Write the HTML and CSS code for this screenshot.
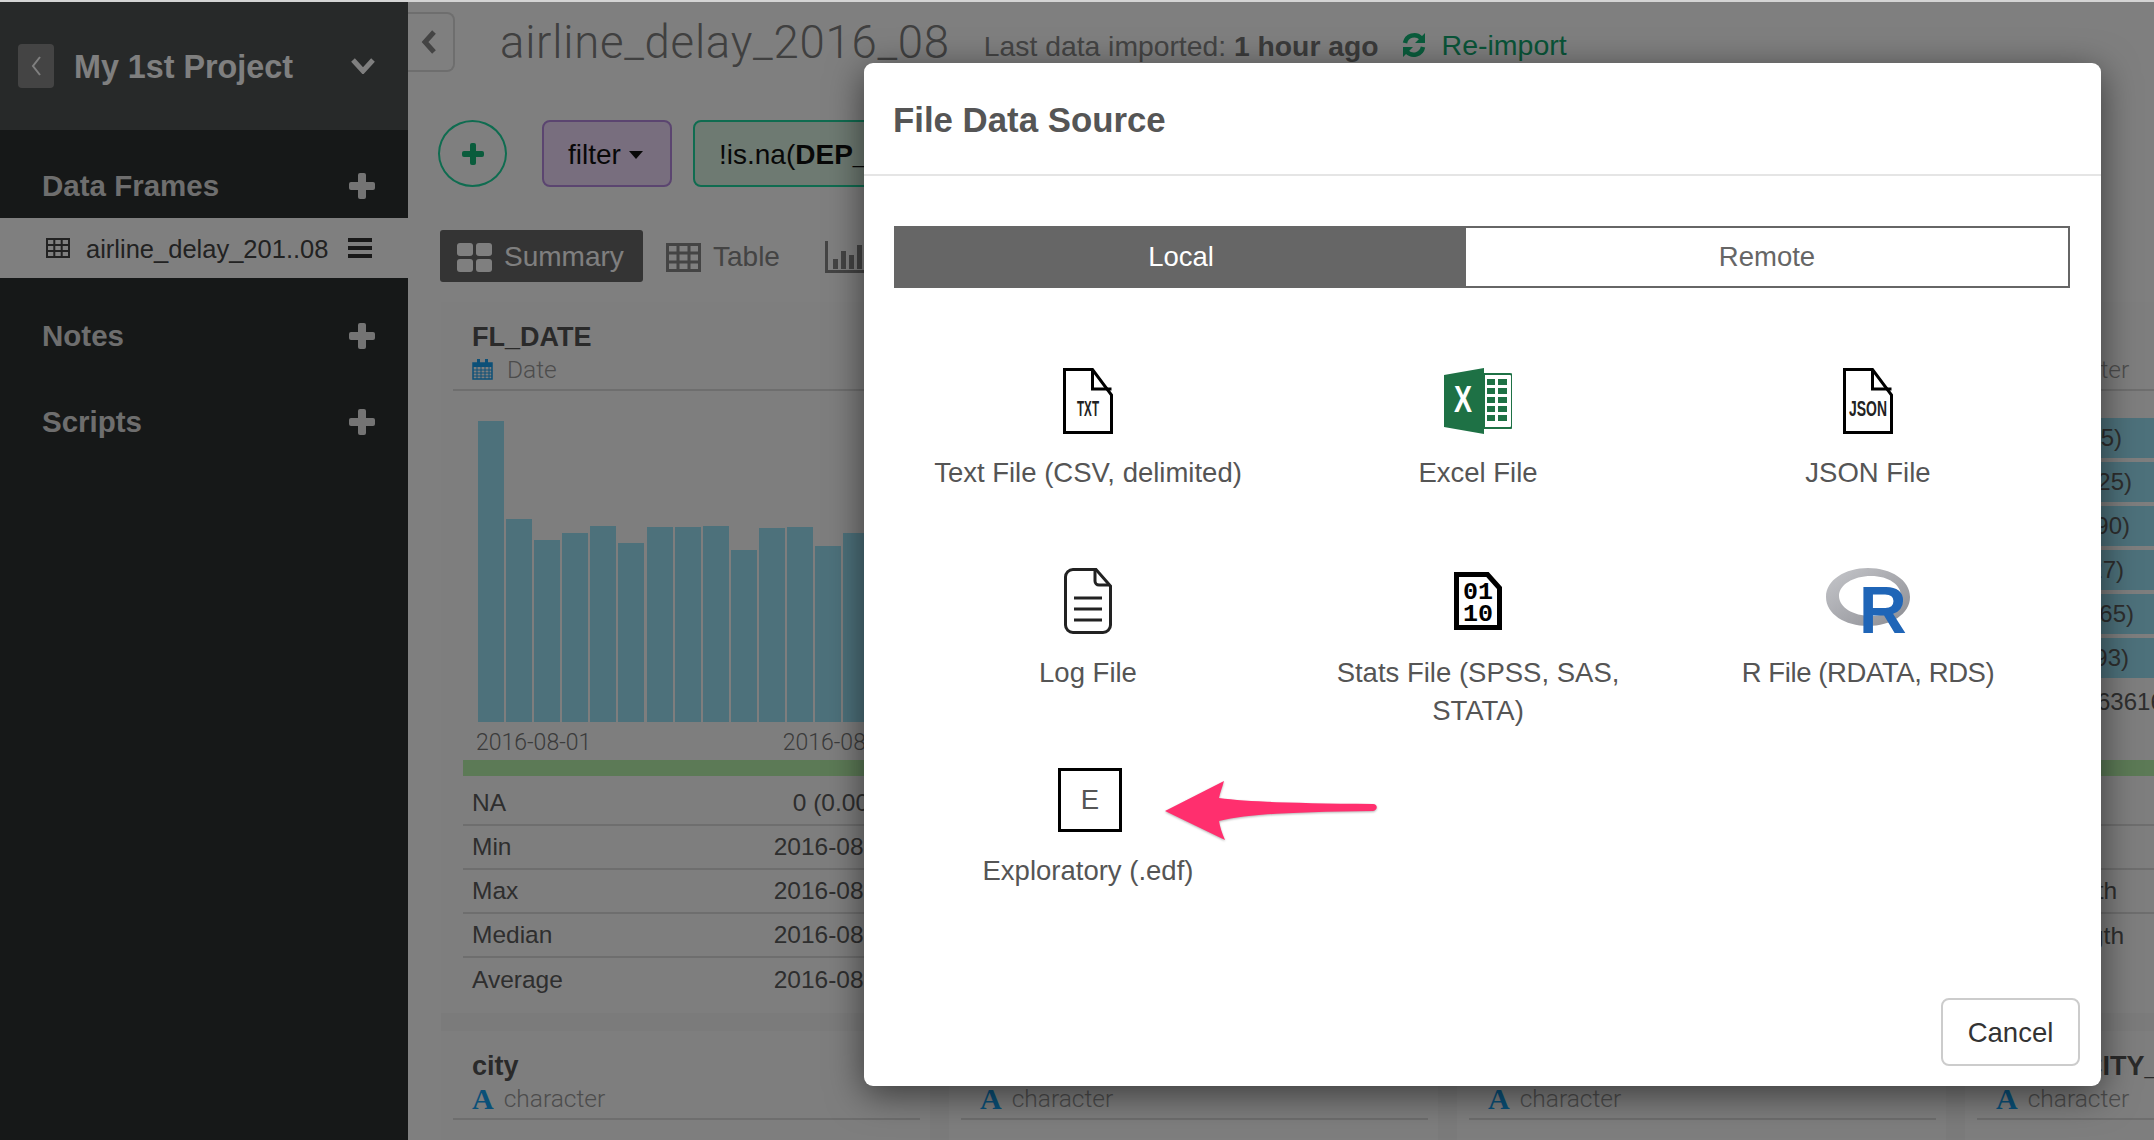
FILE: index.html
```html
<!DOCTYPE html>
<html lang="en">
<head>
  <meta charset="UTF-8" />
  <title>File Data Source</title>
  <link rel="stylesheet" href="styles.css">
</head>
<body>
  <div class="topline"></div>
  <div class="app">

    <!-- Sidebar -->
    <aside class="sidebar">
      <div class="project">
        <span class="project-back"><svg width="12" height="24" viewBox="0 0 12 24"><path d="M10 3 3 12l7 9" fill="none" stroke="#fff" stroke-width="2"/></svg></span>
        <span class="project-name">My 1st Project</span>
        <svg class="project-caret" width="26" height="16" viewBox="0 0 26 16"><path d="M3 2l10 11L23 2" fill="none" stroke="#fff" stroke-width="5"/></svg>
      </div>
      <div class="side-head side-head-first"><span>Data Frames</span><i class="plus"></i></div>
      <div class="frame-row">
        <svg width="24" height="20" viewBox="0 0 24 20"><path d="M1 1h22v18H1zM1 7h22M1 13h22M8.300 1v18M15.700 1v18" fill="none" stroke="#444" stroke-width="2"/></svg>
        <span class="frame-name">airline_delay_201..08</span>
        <span class="burger"><i></i><i></i><i></i></span>
      </div>
      <div class="side-head side-head-notes"><span>Notes</span><i class="plus"></i></div>
      <div class="side-head"><span>Scripts</span><i class="plus"></i></div>
    </aside>

    <!-- Main area behind the dialog -->
    <main class="main">
      <div class="titlebar">
        <span class="collapse"><svg width="16" height="26" viewBox="0 0 16 26"><path d="M13 3 4 13l9 10" fill="none" stroke="#888" stroke-width="5"/></svg></span>
        <span class="frame-title">airline_delay_2016_08</span>
        <span class="imported">Last data imported: <b>1 hour ago</b></span>
        <svg class="reimport-icon" width="26" height="26" viewBox="0 0 26 26"><path d="M4 11a9.500 9.500 0 0 1 16-5M22 15a9.500 9.500 0 0 1-16 5" fill="none" stroke="#14b878" stroke-width="4.500"/><path d="M24 1v10H14zM2 25V15h10z" fill="#14b878"/></svg>
        <span class="reimport">Re-import</span>
      </div>

      <div class="toolbar">
        <span class="add-step"><i class="plus plus-green"></i></span>
        <span class="step step-filter">filter <i class="caret"></i></span>
        <span class="step step-cond">!is.na(<b>DEP_DELAY</b>)</span>
      </div>

      <div class="tabs">
        <span class="tab tab-on"><span class="tiles"><i></i><i></i><i></i><i></i></span>Summary</span>
        <span class="tab"><svg width="35" height="29" viewBox="0 0 35 29"><path d="M1.500 1.500h32v26h-32zM1.500 10h32M1.500 19h32M12 1.500v26M23 1.500v26" fill="none" stroke="#888" stroke-width="3"/></svg>Table</span>
        <span class="tab tab-chart"><svg width="40" height="32" viewBox="0 0 40 32"><path d="M1.500 0v30.500H40" fill="none" stroke="#888" stroke-width="3"/><path d="M8 18h5v10H8zM16 10h5v18h-5zM24 14h5v14h-5zM32 4h5v24h-5z" fill="#888"/></svg>Chart</span>
      </div>

      <div class="cards">
        <section class="card">
          <div class="card-head">
            <div class="col-name">FL_DATE</div>
            <div class="col-type">
              <svg width="21" height="21" viewBox="0 0 21 21"><path d="M1 4h19v16H1z" fill="none" stroke="#18a0f0" stroke-width="1.500"/><path d="M1 4h19v4H1z" fill="#18a0f0"/><path d="M5 0h3v6H5zM13 0h3v6h-3z" fill="#18a0f0"/><path d="M1 11h19M1 14h19M1 17h19M5 8v12M9 8v12M13 8v12M17 8v12" stroke="#18a0f0" stroke-width="1"/></svg>
              <span>Date</span>
            </div>
          </div>
          <div class="card-chart">
            <div class="bars">
              <i style="height:301px"></i><i style="height:203px"></i><i style="height:182px"></i><i style="height:189px"></i><i style="height:196px"></i><i style="height:179px"></i><i style="height:195px"></i><i style="height:195px"></i><i style="height:196px"></i><i style="height:172px"></i><i style="height:194px"></i><i style="height:195px"></i><i style="height:176px"></i><i style="height:189px"></i>
            </div>
            <div class="axis"><span>2016-08-01</span><span>2016-08-31</span></div>
          </div>
          <div class="fill-bar"></div>
          <div class="stats">
            <div class="stat"><span>NA</span><span>0 (0.00%)</span></div>
            <div class="stat"><span>Min</span><span>2016-08-01</span></div>
            <div class="stat"><span>Max</span><span>2016-08-31</span></div>
            <div class="stat"><span>Median</span><span>2016-08-16</span></div>
            <div class="stat"><span>Average</span><span>2016-08-16</span></div>
          </div>
        </section>

        <section class="card"></section>
        <section class="card"></section>

        <section class="card">
          <div class="card-head">
            <div class="col-name">ORIGIN</div>
            <div class="col-type"><span class="type-a">A</span><span>character</span></div>
          </div>
          <div class="card-chart card-chart-list">
            <div class="list-row"><span style="width:135px">(2345)</span></div>
            <div class="list-row"><span style="width:145px">(1925)</span></div>
            <div class="list-row"><span style="width:143px">(1790)</span></div>
            <div class="list-row"><span style="width:137px">(1627)</span></div>
            <div class="list-row"><span style="width:147px">(1565)</span></div>
            <div class="list-row"><span style="width:142px">(1493)</span></div>
            <div class="list-more">63616</div>
          </div>
          <div class="fill-bar"></div>
          <div class="stats">
            <div class="stat"><span>NA</span></div>
            <div class="stat"><span>Unique</span></div>
            <div class="stat"><span>Min Length</span></div>
            <div class="stat"><span>Max Length</span></div>
          </div>
        </section>

        <section class="card">
          <div class="card-head">
            <div class="col-name">city</div>
            <div class="col-type"><span class="type-a">A</span><span>character</span></div>
          </div>
        </section>
        <section class="card">
          <div class="card-head">
            <div class="col-name">carrier</div>
            <div class="col-type"><span class="type-a">A</span><span>character</span></div>
          </div>
        </section>
        <section class="card">
          <div class="card-head">
            <div class="col-name">ORIGIN_CITY_NAME</div>
            <div class="col-type"><span class="type-a">A</span><span>character</span></div>
          </div>
        </section>
        <section class="card">
          <div class="card-head">
            <div class="col-name">DEST_CITY_NAME</div>
            <div class="col-type"><span class="type-a">A</span><span>character</span></div>
          </div>
        </section>
      </div>
    </main>
  </div>

  <div class="backdrop"></div>

  <!-- Dialog -->
  <div class="modal">
    <div class="modal-head">File Data Source</div>
    <div class="modal-body">
      <div class="switch">
        <div class="switch-on">Local</div>
        <div class="switch-off">Remote</div>
      </div>
      <div class="sources">
        <div class="source">
          <div class="source-icon">
            <svg width="50" height="66" viewBox="0 0 50 66"><path d="M1.500 1.500h28L48.500 27v37.500h-47z" fill="#fff" stroke="#000" stroke-width="3"/><path d="M29.500 1.500V21h19" fill="none" stroke="#000" stroke-width="3"/><text x="25" y="48" text-anchor="middle" class="doc-text" textLength="22" lengthAdjust="spacingAndGlyphs">TXT</text></svg>
          </div>
          <div class="source-label">Text File (CSV, delimited)</div>
        </div>
        <div class="source">
          <div class="source-icon">
            <svg width="68" height="66" viewBox="0 0 68 66"><path d="M40 6h26a2 2 0 0 1 2 2v50a2 2 0 0 1-2 2H40z" fill="#fff" stroke="#1e7145" stroke-width="2"/><path d="M40 0 0 7v52l40 7z" fill="#1e7145"/><path d="M43 11h8v6h-8zM54 11h9v6h-9zM43 20h8v6h-8zM54 20h9v6h-9zM43 29h8v6h-8zM54 29h9v6h-9zM43 38h8v6h-8zM54 38h9v6h-9zM43 47h8v6h-8zM54 47h9v6h-9z" fill="#1e7145"/><text x="19" y="44" text-anchor="middle" class="xl-text" textLength="18" lengthAdjust="spacingAndGlyphs">X</text></svg>
          </div>
          <div class="source-label">Excel File</div>
        </div>
        <div class="source">
          <div class="source-icon">
            <svg width="50" height="66" viewBox="0 0 50 66"><path d="M1.500 1.500h28L48.500 27v37.500h-47z" fill="#fff" stroke="#000" stroke-width="3"/><path d="M29.500 1.500V21h19" fill="none" stroke="#000" stroke-width="3"/><text x="25" y="48" text-anchor="middle" class="doc-text" textLength="38" lengthAdjust="spacingAndGlyphs">JSON</text></svg>
          </div>
          <div class="source-label">JSON File</div>
        </div>
        <div class="source">
          <div class="source-icon">
            <svg width="48" height="66" viewBox="0 0 48 66"><path d="M9 1.500h23L46.500 18v39a7.500 7.500 0 0 1-7.500 7.500H9A7.500 7.500 0 0 1 1.500 57V9A7.500 7.500 0 0 1 9 1.500z" fill="#fff" stroke="#222" stroke-width="3"/><path d="M31 2v11a4 4 0 0 0 4 4h11" fill="none" stroke="#222" stroke-width="3"/><path d="M10 30h28M10 41h28M10 52h28" stroke="#222" stroke-width="3"/></svg>
          </div>
          <div class="source-label">Log File</div>
        </div>
        <div class="source">
          <div class="source-icon">
            <svg width="48" height="58" viewBox="0 0 48 58"><path d="M2.500 2.500h31L45.500 16v39.500h-43z" fill="#fff" stroke="#000" stroke-width="5"/><text x="24" y="27" text-anchor="middle" class="bin-text" textLength="30" lengthAdjust="spacingAndGlyphs">01</text><text x="24" y="49" text-anchor="middle" class="bin-text" textLength="30" lengthAdjust="spacingAndGlyphs">10</text></svg>
          </div>
          <div class="source-label">Stats File (SPSS, SAS, STATA)</div>
        </div>
        <div class="source">
          <div class="source-icon">
            <svg width="84" height="66" viewBox="0 0 84 66">
              <defs><linearGradient id="ring" x1="0" y1="0" x2="1" y2="1"><stop offset="0" stop-color="#c6c7cb"/><stop offset="1" stop-color="#8b8c92"/></linearGradient></defs>
              <path fill-rule="evenodd" d="M42 0c23 0 42 12 42 29s-19 29-42 29S0 46 0 29 19 0 42 0zm3 8c-18 0-32 9-32 20s14 20 32 20 30-9 30-20S63 8 45 8z" fill="url(#ring)"/>
              <text x="33" y="65" class="r-text">R</text>
            </svg>
          </div>
          <div class="source-label source-label-tight">R File (RDATA, RDS)</div>
        </div>
        <div class="source">
          <div class="edf-box">E</div>
          <div class="source-label">Exploratory (.edf)</div>
        </div>
      </div>
    </div>
    <div class="modal-foot"><span class="btn-cancel">Cancel</span></div>

    <svg class="arrow" width="214" height="66" viewBox="0 0 214 66"><path d="M2 32 61 2c-2 7-4 12-5 17 30 4 75 5 154 6 5 0 5 6 0 7-79 1-124 3-154 10 1 6 3 12 6 19z" fill="#ff2f6e"/></svg>
  </div>
</body>
</html>
```

FILE: styles.css
```css
* {
  box-sizing: border-box;
}
html, body {
  margin: 0;
  height: 100%;
  overflow: hidden;
}
body {
  position: relative;
  background: #fff;
  color: #666;
  font-family: "Liberation Sans", Arial, sans-serif;
  font-size: 24px;
}
.topline {
  height: 2px;
  background: #d4d4d4;
}
.app {
  display: flex;
  height: 1138px;
}

/* sidebar */
.sidebar {
  width: 408px;
  flex: none;
  background: #2c3030;
}
.project {
  height: 128px;
  background: #4e5252;
  display: flex;
  align-items: center;
  padding: 0 32px 0 18px;
  color: #fff;
}
.project-back {
  width: 36px;
  height: 44px;
  border-radius: 4px;
  background: #888;
  display: flex;
  align-items: center;
  justify-content: center;
}
.project-name {
  margin-left: 20px;
  padding-top: 2px;
  font-size: 32.300px;
  font-weight: bold;
  flex: 1;
}
.side-head {
  height: 86px;
  padding: 0 33px 0 42px;
  display: flex;
  align-items: center;
  justify-content: space-between;
  font-size: 29.500px;
  font-weight: bold;
  color: #dcdcdc;
}
.side-head-first {
  height: 88px;
  padding-top: 24px;
}
.side-head-notes {
  margin-top: 15px;
}
.plus {
  position: relative;
  display: block;
  width: 26px;
  height: 26px;
}
.plus::before, .plus::after {
  content: "";
  position: absolute;
  background: #e8e8e8;
  border-radius: 2px;
}
.plus::before {
  left: 0;
  right: 0;
  top: 9px;
  height: 8px;
}
.plus::after {
  top: 0;
  bottom: 0;
  left: 9px;
  width: 8px;
}
.plus-green {
  width: 22px;
  height: 22px;
}
.plus-green::before {
  top: 8px;
  height: 6px;
  background: #14b878;
}
.plus-green::after {
  left: 8px;
  width: 6px;
  background: #14b878;
}
.frame-row {
  height: 60px;
  background: #fff;
  display: flex;
  align-items: center;
  padding: 0 36px 0 46px;
  color: #444;
}
.frame-name {
  margin-left: 16px;
  padding-top: 2px;
  font-size: 25.500px;
  flex: 1;
}
.burger {
  display: flex;
  flex-direction: column;
  gap: 4px;
  width: 24px;
}
.burger i {
  height: 4px;
  background: #333;
}

/* main area */
.main {
  flex: 1;
  min-width: 0;
  overflow: hidden;
}
.titlebar {
  display: flex;
  align-items: center;
  height: 70px;
  padding-top: 10px;
}
.collapse {
  width: 47px;
  height: 60px;
  border: 2px solid #ddd;
  border-left: 0;
  border-radius: 0 8px 8px 0;
  display: flex;
  align-items: center;
  padding-left: 13px;
}
.frame-title {
  margin-left: 45px;
  font-family: Roboto, "Liberation Sans", sans-serif;
  font-weight: 300;
  font-size: 45.500px;
  letter-spacing: .75px;
  color: #808080;
}
.imported {
  margin-left: 34px;
  padding-top: 8px;
  font-size: 28.300px;
  color: #888;
}
.imported b {
  color: #777;
}
.reimport-icon {
  margin-left: 22px;
  margin-top: 6px;
}
.reimport {
  margin-left: 15px;
  padding-top: 6px;
  font-size: 28.500px;
  color: #12a870;
}
.toolbar {
  display: flex;
  align-items: center;
  gap: 21px;
  height: 67px;
  margin-top: 48px;
  padding-left: 30px;
}
.add-step {
  width: 69px;
  height: 67px;
  border: 2px solid #1ed8a0;
  border-radius: 50%;
  display: flex;
  align-items: center;
  justify-content: center;
  margin-right: 14px;
}
.step {
  height: 67px;
  border-radius: 8px;
  border: 2px solid;
  display: flex;
  align-items: center;
  padding-top: 2px;
  font-size: 28px;
  color: #111;
  white-space: nowrap;
}
.step-filter {
  width: 130px;
  padding-left: 24px;
  background: #f0dcfc;
  border-color: #b68ae0;
}
.caret {
  width: 0;
  height: 0;
  margin-left: 8px;
  border: 7px solid transparent;
  border-top: 8px solid #111;
  border-bottom: 0;
}
.step-cond {
  width: 500px;
  padding-left: 24px;
  background: #dcf4e4;
  border-color: #1ed8a0;
}
.tabs {
  display: flex;
  gap: 23px;
  height: 52px;
  margin-top: 43px;
  margin-left: 32px;
}
.tab {
  display: flex;
  align-items: center;
  gap: 12px;
  padding-top: 2px;
  font-size: 28px;
  color: #888;
}
.tab-on {
  width: 203px;
  padding: 2px 0 0 17px;
  border-radius: 3px;
  background: #686868;
  color: #fff;
}
.tab-chart {
  margin-left: 22px;
}
.tiles {
  display: grid;
  grid-template-columns: 16px 16px;
  gap: 3px;
}
.tiles i {
  height: 13px;
  border-radius: 3px;
  background: #fff;
}

/* column summary cards */
.cards {
  display: grid;
  grid-template-columns: repeat(4, 489px);
  grid-template-rows: 711px 200px;
  gap: 18px 19px;
  margin: 20px 0 0 33px;
  background: #f6f6f6;
}
.card {
  background: #fdfdfd;
}
.card-head {
  height: 89px;
  margin: 0 10px 0 12px;
  padding: 19px 0 0 19px;
  border-bottom: 2px solid #dcdcdc;
}
.col-name {
  line-height: 32px;
  font-size: 27px;
  font-weight: bold;
  color: #555;
  white-space: nowrap;
}
.col-type {
  display: flex;
  align-items: center;
  gap: 14px;
  height: 33px;
  font-family: Roboto, "Liberation Sans", sans-serif;
  font-weight: 300;
  font-size: 24.500px;
  color: #999;
}
.type-a {
  margin-right: -4px;
  font-family: "Liberation Serif", serif;
  font-weight: bold;
  font-size: 30px;
  color: #14a0f0;
}
.card-chart {
  height: 369px;
  padding: 29px 0 0 37px;
}
.bars {
  display: flex;
  align-items: flex-end;
  gap: 2.100px;
  height: 302px;
}
.bars i {
  width: 26px;
  flex: none;
  background: #9ae2f6;
}
.axis {
  display: flex;
  justify-content: space-between;
  width: 422px;
  margin: 6px 0 0 -2px;
  line-height: 30px;
  font-family: Roboto, "Liberation Sans", sans-serif;
  font-weight: 300;
  font-size: 23px;
  color: #777;
}
.fill-bar {
  height: 16px;
  margin: 0 0 0 22px;
  background: #b8f4ac;
}
.stats {
  margin: 6px 10px 0 22px;
}
.stat {
  display: flex;
  justify-content: space-between;
  align-items: center;
  height: 44px;
  padding: 0 21px 0 9px;
  border-bottom: 2px solid #dcdcdc;
  font-size: 24.500px;
  color: #5c5c5c;
  white-space: nowrap;
}
.stat:last-child {
  border-bottom: 0;
}
.card-chart-list {
  padding: 27px 0 0 0;
}
.list-row {
  height: 40px;
  margin-bottom: 4px;
  padding-left: 22px;
  background: #9ae2f6;
  text-align: right;
  line-height: 40px;
  color: #5c5c5c;
}
.list-row span {
  display: block;
}
.list-more {
  padding-left: 132px;
  line-height: 40px;
  color: #5c5c5c;
  white-space: nowrap;
}

/* dialog */
.backdrop {
  position: absolute;
  inset: 2px 0 0 0;
  background: rgba(0, 0, 0, .5);
}
.modal {
  position: absolute;
  left: 864px;
  top: 63px;
  width: 1237px;
  height: 1023px;
  display: flex;
  flex-direction: column;
  background: #fff;
  border-radius: 9px;
  box-shadow: 0 8px 36px rgba(0, 0, 0, .55);
  color: #555;
}
.modal-head {
  height: 113px;
  padding: 36px 29px 0;
  border-bottom: 2px solid #e5e5e5;
  font-size: 34.800px;
  font-weight: bold;
  line-height: 42px;
}
.modal-body {
  padding: 50px 31px 0 29px;
}
.switch {
  display: flex;
  height: 62px;
  margin-left: 1px;
  border: 2px solid #666;
  font-size: 27.500px;
  line-height: 58px;
  text-align: center;
}
.switch-on {
  width: 570px;
  background: #666;
  color: #fff;
}
.switch-off {
  flex: 1;
  color: #666;
}
.sources {
  display: grid;
  grid-template-columns: repeat(3, 390px);
  grid-auto-rows: 200px;
  margin-top: 80px;
}
.source {
  padding: 0 30px;
  display: flex;
  flex-direction: column;
  align-items: center;
  text-align: center;
  font-size: 27.500px;
}
.source-icon {
  height: 66px;
  display: flex;
  align-items: center;
}
.source-label {
  margin-top: 20px;
  line-height: 38px;
}
.source-label-tight {
  letter-spacing: -.4px;
}
.edf-box {
  width: 64px;
  height: 64px;
  margin-left: 4px;
  border: 3px solid #000;
  display: flex;
  align-items: center;
  justify-content: center;
}
.doc-text {
  font-family: "Liberation Sans", sans-serif;
  font-size: 22px;
  font-weight: bold;
  fill: #222;
}
.xl-text {
  font-family: "Liberation Sans", sans-serif;
  font-size: 36px;
  font-weight: bold;
  fill: #fff;
}
.bin-text {
  font-family: "Liberation Mono", monospace;
  font-size: 23px;
  font-weight: bold;
  fill: #000;
}
.r-text {
  font-family: "Liberation Sans", sans-serif;
  font-size: 66px;
  font-weight: bold;
  fill: #1f65b7;
}
.modal-foot {
  margin-top: auto;
  padding: 0 21px 20px 0;
  display: flex;
  justify-content: flex-end;
}
.btn-cancel {
  width: 139px;
  height: 68px;
  border: 2px solid #ccc;
  border-radius: 8px;
  text-align: center;
  line-height: 66px;
  font-size: 27.500px;
  color: #333;
}
.arrow {
  position: absolute;
  left: 299px;
  top: 716px;
  filter: drop-shadow(0 1px 1px rgba(0, 0, 0, .3));
}
```
